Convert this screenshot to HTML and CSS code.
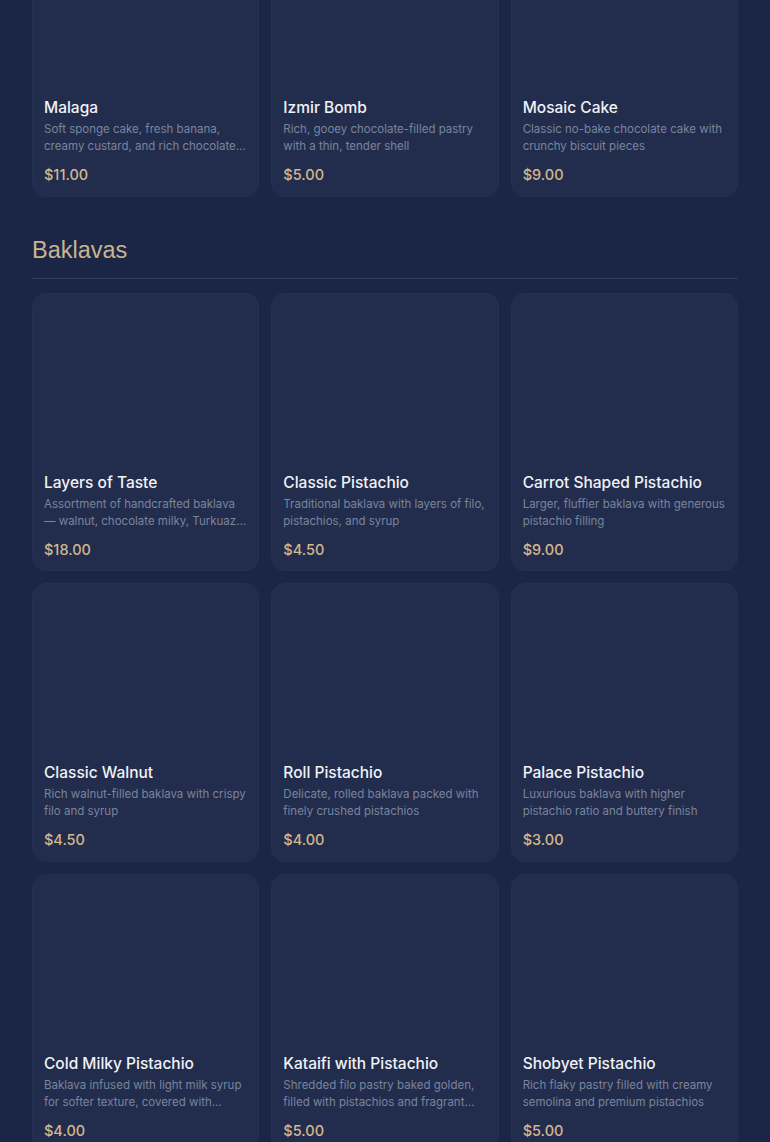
FILE: index.html
```html
<!DOCTYPE html>
<html lang="en">
<head>
<meta charset="utf-8">
<title>Menu</title>
<link rel="stylesheet" href="styles.css">
</head>
<body>
<main class="menu">
  <div class="grid grid-first">
    <div class="card"><div class="thumb"></div><div class="body"><h3 class="name">Malaga</h3><p class="desc">Soft sponge cake, fresh banana, creamy custard, and rich chocolate ganache layered together</p><div class="price">$11.00</div></div></div>
    <div class="card"><div class="thumb"></div><div class="body"><h3 class="name">Izmir Bomb</h3><p class="desc">Rich, gooey chocolate-filled pastry with a thin, tender shell</p><div class="price">$5.00</div></div></div>
    <div class="card"><div class="thumb"></div><div class="body"><h3 class="name">Mosaic Cake</h3><p class="desc">Classic no-bake chocolate cake with crunchy biscuit pieces</p><div class="price">$9.00</div></div></div>
  </div>

  <section class="section">
    <h2 class="section-title">Baklavas</h2>
    <div class="grid">
      <div class="card"><div class="thumb"></div><div class="body"><h3 class="name">Layers of Taste</h3><p class="desc">Assortment of handcrafted baklava — walnut, chocolate milky, Turkuaz and more in one box</p><div class="price">$18.00</div></div></div>
      <div class="card"><div class="thumb"></div><div class="body"><h3 class="name">Classic Pistachio</h3><p class="desc">Traditional baklava with layers of filo, pistachios, and syrup</p><div class="price">$4.50</div></div></div>
      <div class="card"><div class="thumb"></div><div class="body"><h3 class="name">Carrot Shaped Pistachio</h3><p class="desc">Larger, fluffier baklava with generous pistachio filling</p><div class="price">$9.00</div></div></div>
      <div class="card"><div class="thumb"></div><div class="body"><h3 class="name">Classic Walnut</h3><p class="desc">Rich walnut-filled baklava with crispy filo and syrup</p><div class="price">$4.50</div></div></div>
      <div class="card"><div class="thumb"></div><div class="body"><h3 class="name">Roll Pistachio</h3><p class="desc">Delicate, rolled baklava packed with finely crushed pistachios</p><div class="price">$4.00</div></div></div>
      <div class="card"><div class="thumb"></div><div class="body"><h3 class="name">Palace Pistachio</h3><p class="desc">Luxurious baklava with higher pistachio ratio and buttery finish</p><div class="price">$3.00</div></div></div>
      <div class="card"><div class="thumb"></div><div class="body"><h3 class="name">Cold Milky Pistachio</h3><p class="desc">Baklava infused with light milk syrup for softer texture, covered with pistachio powder</p><div class="price">$4.00</div></div></div>
      <div class="card"><div class="thumb"></div><div class="body"><h3 class="name">Kataifi with Pistachio</h3><p class="desc">Shredded filo pastry baked golden, filled with pistachios and fragrant syrup</p><div class="price">$5.00</div></div></div>
      <div class="card"><div class="thumb"></div><div class="body"><h3 class="name">Shobyet Pistachio</h3><p class="desc">Rich flaky pastry filled with creamy semolina and premium pistachios</p><div class="price">$5.00</div></div></div>
    </div>
  </section>
</main>
</body>
</html>
```
FILE: styles.css
```css
* { box-sizing: border-box; }

html, body {
  margin: 0;
  padding: 0;
  background: #1b2646;
}

body {
  font-family: Inter, "Noto Sans", "Liberation Sans", sans-serif;
  color: #eef0f5;
  overflow: hidden;
}

.menu {
  padding: 0 32px 40px;
}

.grid {
  display: grid;
  grid-template-columns: repeat(3, 1fr);
  gap: 12px;
}

.grid-first {
  margin-top: -82px;
}

.card {
  height: 278.5px;
  background: #222d4d;
  border: 1px solid #243050;
  border-radius: 14px;
  display: flex;
  flex-direction: column;
  overflow: hidden;
}

.thumb {
  height: 167px;
  flex: none;
}

.body {
  padding: 12px 11px 12px;
  display: flex;
  flex-direction: column;
}

.name {
  margin: 0;
  font-size: 15.5px;
  line-height: 20px;
  font-weight: 500;
  color: #f1f2f6;
  white-space: nowrap;
}

.desc {
  margin: 3px 0 0;
  font-size: 11.5px;
  line-height: 17px;
  height: 34px;
  color: #7a849c;
  display: -webkit-box;
  -webkit-line-clamp: 2;
  -webkit-box-orient: vertical;
  overflow: hidden;
}

.price {
  margin-top: 10px;
  font-size: 14.5px;
  line-height: 20px;
  font-weight: 500;
  color: #d3b78e;
}

.section {
  margin-top: 37px;
}

.section-title {
  margin: 0 0 14px;
  padding-bottom: 12px;
  border-bottom: 1px solid #2f3b5b;
  font-family: "Liberation Sans", Arial, sans-serif;
  font-weight: 400;
  font-size: 23.5px;
  line-height: 32px;
  color: #c9b48f;
}
```
